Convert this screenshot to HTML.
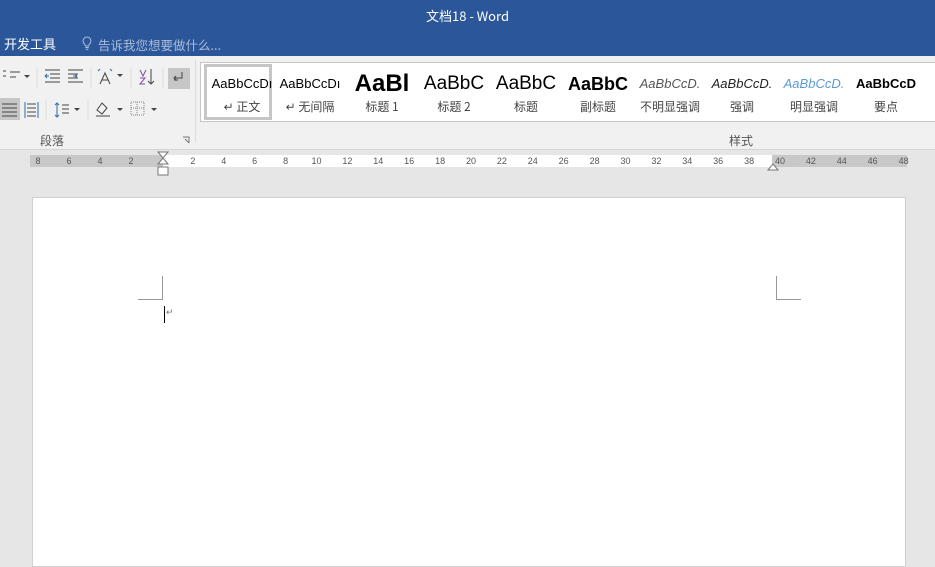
<!DOCTYPE html>
<html><head><meta charset="utf-8"><style>
*{margin:0;padding:0;box-sizing:border-box}
body{width:935px;height:556px;overflow:hidden;background:#e6e6e6;font-family:"Liberation Sans","Noto Sans CJK SC",sans-serif;position:relative}
.a{position:absolute}
.top{left:0;top:0;width:935px;height:56px;background:#2b579a;color:#fff}
.rib{left:0;top:56px;width:935px;height:94px;background:#f1f1f1;border-bottom:1px solid #d5d5d5}
.cn{font-family:"Noto Sans CJK SC","Liberation Sans",sans-serif}
.sty{position:absolute;top:66px;width:72px;height:54px;text-align:center}
.sty .s{height:32px;line-height:36px;font-size:14px;white-space:nowrap;overflow:hidden;padding:0 4px;font-family:"Liberation Sans",sans-serif}
.sty .n{font-size:12px;color:#444;line-height:18px}
.rn{position:absolute;top:156px;font-size:9px;color:#555;transform:translateX(-50%)}
</style></head><body>
<div class="a top">
 <div class="a cn" style="left:0;width:935px;top:6px;text-align:center;font-size:13px">文档18 - Word</div>
 <div class="a cn" style="left:4px;top:34px;font-size:13px">开发工具</div>
 <svg class="a" style="left:81px;top:36px" width="12" height="15"><path d="M6 1a4 4 0 0 0-2.5 7c.5.5.8 1 .8 2h3.4c0-1 .3-1.5.8-2A4 4 0 0 0 6 1zM4.3 11.5h3.4M4.6 13.3h2.8" stroke="#a9bcd9" fill="none"/></svg>
 <div class="a cn" style="left:98px;top:35px;font-size:12.5px;color:#a9bcd9">告诉我您想要做什么...</div>
</div>
<div class="a rib">
 <svg class="a" style="left:0;top:10px" width="200" height="50" fill="none" stroke="#444">
  <path d="M3 5h3M3 10h3M10 6h10M10 11h6" /><path d="M24 9l3 3 3-3" fill="#444" stroke="none"/>
  <path d="M37 2v20" stroke="#ddd"/>
  <path d="M45 4h15M50 8h10M50 12h10M45 16h15" /><path d="M49 10l-4 0M45 10l2-2M45 10l2 2" stroke="#2b6cb0"/>
  <path d="M68 4h15M68 8h10M68 12h10M68 16h15" /><path d="M73 10h4M77 10l-2-2M77 10l-2 2" stroke="#2b6cb0"/>
  <path d="M91 2v20" stroke="#ddd"/>
  <path d="M100 18l5-11 5 11M102 14h6" /><path d="M98 5l2-2M112 5l-2-2" stroke="#2b6cb0"/><path d="M117 8l3 3 3-3" fill="#444" stroke="none"/>
  <path d="M131 2v20" stroke="#ddd"/>
  <path d="M140 4l3 6 3-6M140 12h5l-5 6h5" stroke="#7a4fa0"/><path d="M151 3v15M148 15l3 3 3-3"/>
  <path d="M163 2v20" stroke="#ddd"/>
  <rect x="168" y="2" width="22" height="21" fill="#c6c6c6" stroke="none"/><path d="M182 6v6h-8M176 10l-2 2 2 2M174 14h4" />
 </svg>
 <svg class="a" style="left:0;top:42px" width="200" height="26" fill="none" stroke="#444">
  <rect x="0" y="0" width="20" height="22" fill="#c6c6c6" stroke="none"/><path d="M2 6h15M2 10h15M2 14h15M2 18h15"/>
  <path d="M25 4v16M38 4v16" stroke="#2b6cb0"/><path d="M27 6h9M27 10h9M27 14h9M27 18h9"/>
  <path d="M46 2v20" stroke="#ddd"/>
  <path d="M57 5v14M55 7l2-2 2 2M55 17l2 2 2-2" stroke="#2b6cb0"/><path d="M62 7h7M62 11h7M62 15h7"/><path d="M74 10l3 3 3-3" fill="#444" stroke="none"/>
  <path d="M88 2v20" stroke="#ddd"/>
  <path d="M97 12l5-7 5 5-5 6z"/><path d="M96 18h14"/><path d="M117 10l3 3 3-3" fill="#444" stroke="none"/>
  <path d="M131 4h13v13h-13zM137 4v13M131 10h13" stroke="#888" stroke-dasharray="1 1"/><path d="M151 10l3 3 3-3" fill="#444" stroke="none"/>
 </svg>
 <div class="a cn" style="left:40px;top:76px;font-size:12px;color:#555">段落</div>
 <svg class="a" style="left:182px;top:80px" width="8" height="8" stroke="#777" fill="none"><path d="M1 1h6v6M3 3l4 4"/></svg>
 <div class="a" style="left:195px;top:4px;width:1px;height:82px;background:#dadada"></div>
 <div class="a" style="left:200px;top:6px;width:740px;height:60px;background:#fff;border:1px solid #c6c6c6"></div>
 <div class="a cn" style="left:729px;top:76px;font-size:12px;color:#555">样式</div>
</div>
<div class="a" style="left:204px;top:64px;width:68px;height:56px;border:3px solid #c6c6c6"></div>
<div class="sty cn" style="left:206px"><div class="s" style="font-size:13px;padding:0 2px">AaBbCcDı</div><div class="n">↵ 正文</div></div>
<div class="sty cn" style="left:274px"><div class="s" style="font-size:13px">AaBbCcDı</div><div class="n">↵ 无间隔</div></div>
<div class="sty cn" style="left:346px"><div class="s" style="font-size:24px;font-weight:bold">AaBl</div><div class="n">标题 1</div></div>
<div class="sty cn" style="left:418px"><div class="s" style="font-size:19px">AaBbC</div><div class="n">标题 2</div></div>
<div class="sty cn" style="left:490px"><div class="s" style="font-size:19px">AaBbC</div><div class="n">标题</div></div>
<div class="sty cn" style="left:562px"><div class="s" style="font-size:18px;font-weight:bold">AaBbC</div><div class="n">副标题</div></div>
<div class="sty cn" style="left:634px"><div class="s" style="font-size:13px;font-style:italic;color:#555">AaBbCcD.</div><div class="n">不明显强调</div></div>
<div class="sty cn" style="left:706px"><div class="s" style="font-size:13px;font-style:italic;color:#222">AaBbCcD.</div><div class="n">强调</div></div>
<div class="sty cn" style="left:778px"><div class="s" style="font-size:13px;font-style:italic;color:#5b9bd5">AaBbCcD.</div><div class="n">明显强调</div></div>
<div class="sty cn" style="left:850px"><div class="s" style="font-size:13px;font-weight:bold">AaBbCcD</div><div class="n">要点</div></div>
<div class="a" style="left:30px;top:155px;width:877px;height:12px;background:#c8c8c8"></div>
<div class="a" style="left:163px;top:155px;width:609px;height:12px;background:#fff"></div>
<div id="r"></div>
<svg class="a" style="left:157px;top:151px" width="12" height="26" fill="#fff" stroke="#777"><path d="M1 1h10l-5 6zM1 13l5-6 5 6zM1 16h10v8H1z"/></svg>
<svg class="a" style="left:767px;top:162px" width="12" height="9" fill="#fff" stroke="#777"><path d="M1 8l5-6 5 6z"/></svg>
<div class="a" style="left:32px;top:197px;width:874px;height:370px;background:#fff;border:1px solid #d0d0d0"></div>
<div class="a" style="left:138px;top:276px;width:25px;height:24px;border-right:1px solid #999;border-bottom:1px solid #999"></div>
<div class="a" style="left:776px;top:276px;width:25px;height:24px;border-left:1px solid #999;border-bottom:1px solid #999"></div>
<div class="a" style="left:164px;top:306px;width:1px;height:17px;background:#000"></div>
<div class="a" style="left:166px;top:307px;font-size:9px;color:#777">↵</div>
<script>
var h='';var L=[[8,38],[6,69],[4,100],[2,131]];
L.forEach(function(p){h+='<div class="rn" style="left:'+p[1]+'px">'+p[0]+'</div>'});
for(var n=2;n<=48;n+=2){var x=162+n*15.45;h+='<div class="rn" style="left:'+x.toFixed(1)+'px">'+n+'</div>'}
document.getElementById('r').innerHTML=h;
</script>
</body></html>
